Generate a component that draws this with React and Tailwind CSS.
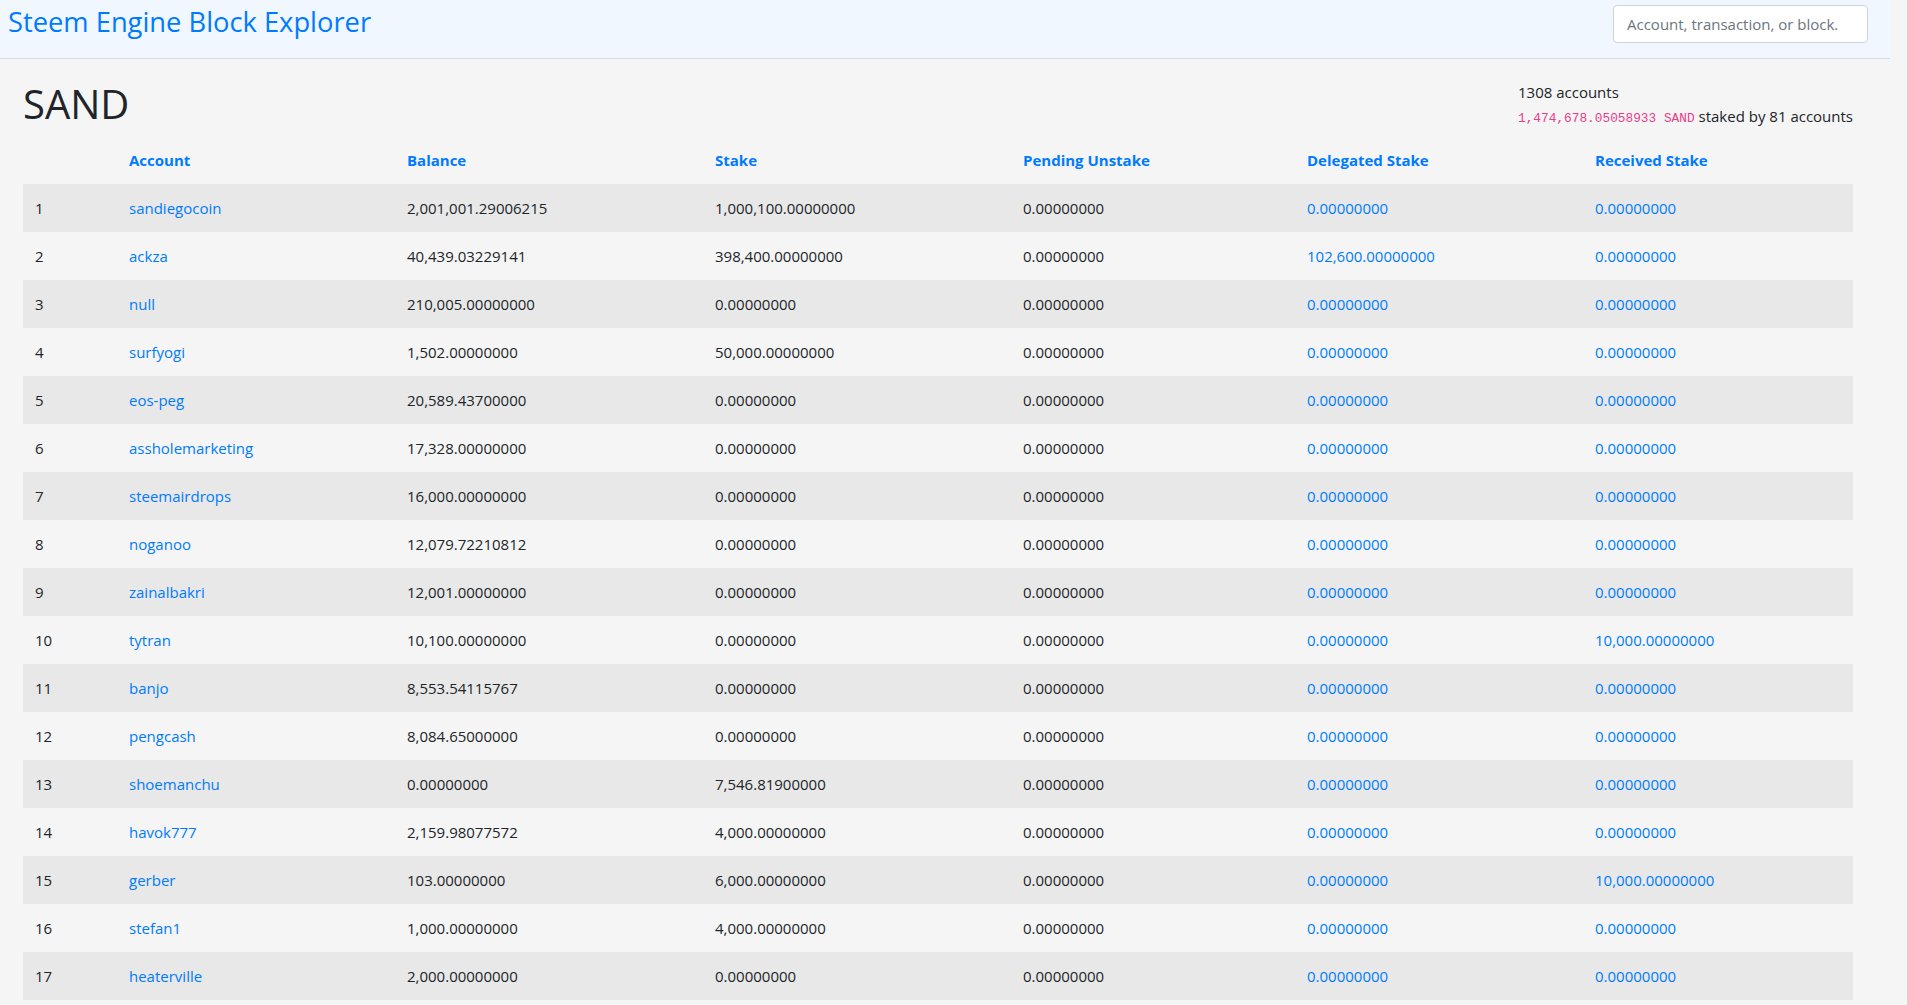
import React from "react";

const Z = "0.00000000";

const rows = [
  ["sandiegocoin", "2,001,001.29006215", "1,000,100.00000000", Z, Z, Z],
  ["ackza", "40,439.03229141", "398,400.00000000", Z, "102,600.00000000", Z],
  ["null", "210,005.00000000", Z, Z, Z, Z],
  ["surfyogi", "1,502.00000000", "50,000.00000000", Z, Z, Z],
  ["eos-peg", "20,589.43700000", Z, Z, Z, Z],
  ["assholemarketing", "17,328.00000000", Z, Z, Z, Z],
  ["steemairdrops", "16,000.00000000", Z, Z, Z, Z],
  ["noganoo", "12,079.72210812", Z, Z, Z, Z],
  ["zainalbakri", "12,001.00000000", Z, Z, Z, Z],
  ["tytran", "10,100.00000000", Z, Z, Z, "10,000.00000000"],
  ["banjo", "8,553.54115767", Z, Z, Z, Z],
  ["pengcash", "8,084.65000000", Z, Z, Z, Z],
  ["shoemanchu", Z, "7,546.81900000", Z, Z, Z],
  ["havok777", "2,159.98077572", "4,000.00000000", Z, Z, Z],
  ["gerber", "103.00000000", "6,000.00000000", Z, Z, "10,000.00000000"],
  ["stefan1", "1,000.00000000", "4,000.00000000", Z, Z, Z],
  ["heaterville", "2,000.00000000", Z, Z, Z, Z],
];

const Navbar = () => (
  <div className="h-[59px] bg-[#f0f7ff] border-b border-[#d6dde5] flex items-start justify-between pt-[5px] pl-[8px] pr-[22px]">
    <a className="text-[27.3px] leading-[34px] text-[#007bff] cursor-pointer">
      Steem Engine Block Explorer
    </a>
    <input
      type="text"
      placeholder="Account, transaction, or block."
      className="w-[255px] h-[38px] bg-white border border-[#ced4da] rounded-[4px] px-[13px] text-[15px] text-[#495057] placeholder:text-[#6c757d] outline-none"
    />
  </div>
);

const TokenTable = () => (
  <table className="w-full table-fixed border-collapse text-[15px] leading-[24px]">
    <thead>
      <tr className="text-left text-[#007bff] font-bold">
        <th className="w-[94px] p-3"></th>
        <th className="w-[278px] p-3">Account</th>
        <th className="w-[308px] p-3">Balance</th>
        <th className="w-[308px] p-3">Stake</th>
        <th className="w-[284px] p-3">Pending Unstake</th>
        <th className="w-[288px] p-3">Delegated Stake</th>
        <th className="w-[270px] p-3">Received Stake</th>
      </tr>
    </thead>
    <tbody>
      {rows.map((r, i) => (
        <tr key={r[0]} className={i % 2 === 0 ? "bg-[#e8e8e8]" : ""}>
          <td className="p-3">{i + 1}</td>
          <td className="p-3">
            <a className="text-[#007bff] cursor-pointer">{r[0]}</a>
          </td>
          <td className="p-3">{r[1]}</td>
          <td className="p-3">{r[2]}</td>
          <td className="p-3">{r[3]}</td>
          <td className="p-3">
            <a className="text-[#007bff] cursor-pointer">{r[4]}</a>
          </td>
          <td className="p-3">
            <a className="text-[#007bff] cursor-pointer">{r[5]}</a>
          </td>
        </tr>
      ))}
    </tbody>
  </table>
);

export default function App() {
  return (
    <div className="h-screen overflow-y-scroll pr-[17px] bg-[#f5f5f5] text-[#212529] font-['Open_Sans',sans-serif] [&::-webkit-scrollbar]:w-[17px] [&::-webkit-scrollbar-track]:bg-[#f1f1f1] [&::-webkit-scrollbar-thumb]:bg-[#c1c1c1]">
      <Navbar />
      <div className="pl-[23px] pr-[37px] pt-[21px] pb-[48px]">
        <div className="flex justify-between items-start mb-2">
          <h1 className="text-[40px] leading-[48px] font-normal">SAND</h1>
          <div className="text-[15px] leading-[24px]">
            <div className="h-[24px]">1308 accounts</div>
            <div className="h-[24px] whitespace-nowrap">
              <code className="font-['Liberation_Mono',monospace] text-[12.8px] leading-none text-[#e83e8c]">
                1,474,678.05058933 SAND
              </code>{" "}
              staked by 81 accounts
            </div>
          </div>
        </div>
        <TokenTable />
      </div>
    </div>
  );
}
